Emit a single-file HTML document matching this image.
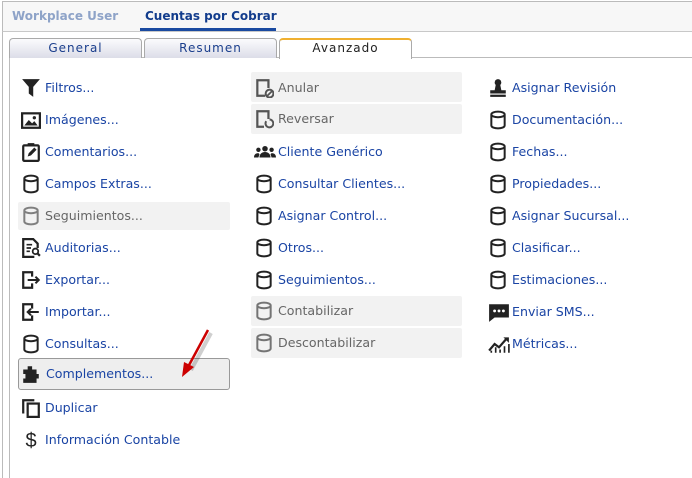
<!DOCTYPE html>
<html><head><meta charset="utf-8"><style>
*{margin:0;padding:0;box-sizing:border-box}
body{width:692px;height:478px;background:#fff;font-family:"DejaVu Sans","Liberation Sans",sans-serif;position:relative;overflow:hidden}
.a{position:absolute}
.top{left:2px;top:1px;width:690px;height:31px;background:#f7f7f7;border-top:1px solid #bbb;border-bottom:1px solid #c8c8c8;border-left:1px solid #bbb}
.t1{left:12px;top:9px;font-size:12px;font-weight:bold;color:#8ea3c8}
.t2{left:145px;top:9px;font-size:12px;font-weight:bold;color:#123c8c}
.ul{left:140px;top:28px;width:136px;height:3px;background:#1a4aa0}
.lb{left:2px;top:32px;width:1px;height:446px;background:#bbb}
.lb2{left:9px;top:57px;width:1px;height:421px;background:#bbb}
.tabline{left:9px;top:57px;width:683px;height:1px;background:#bbb}
.tab{top:38px;height:20px;border:1px solid #aaa;border-bottom:none;border-radius:4px 4px 0 0;background:linear-gradient(#fbfbfd,#dcdde8);font-size:12px;color:#1a3e8c;text-align:center;line-height:18px;letter-spacing:1px}
.tab.on{background:#fff;border-top:2px solid #f0b030;height:21px;color:#222;line-height:17px}
.it{position:absolute;height:28px;width:212px;font-size:12.6px;color:#1a44a4;line-height:28px;padding-left:27px;white-space:nowrap}
.it svg{position:absolute;left:3px;top:4px}
.dis{background:#f2f2f2;color:#666;border-radius:2px}
.sel{background:#eee;border:1px solid #999;border-radius:3px;height:32px;line-height:30px}
</style></head><body>
<div class="a top"></div>
<div class="a t1">Workplace User</div>
<div class="a t2">Cuentas por Cobrar</div>
<div class="a ul"></div>
<div class="a lb"></div>
<div class="a lb2"></div>
<div class="a tabline"></div>
<div class="a tab" style="left:9px;width:133px">General</div>
<div class="a tab" style="left:144px;width:133px">Resumen</div>
<div class="a tab on" style="left:279px;width:133px">Avanzado</div>

<svg width="0" height="0" style="position:absolute"><defs>
<symbol id="cy" viewBox="0 0 18 18"><path d="M3 4v10c0 1.5 2.7 2.5 6 2.5s6-1 6-2.5V4M3 4c0-1.5 2.7-2.5 6-2.5s6 1 6 2.5-2.7 2.5-6 2.5S3 5.5 3 4z" fill="none" stroke="#222" stroke-width="1.8"/></symbol>
</defs></svg>

<!-- column 1 -->
<div class="it" style="left:18px;top:74px"><svg width="20" height="20" viewBox="0 0 18 18"><path d="M1 1h16l-6 7v9l-4-3V8z" fill="#222"/></svg>Filtros...</div>
<div class="it" style="left:18px;top:106px"><svg width="20" height="20" viewBox="0 0 18 18"><rect x="1" y="3" width="16" height="13" fill="none" stroke="#222" stroke-width="2"/><path d="M3 14l4-5 3 3 2-2 3 4z" fill="#222"/><circle cx="12" cy="7" r="1.5" fill="#222"/></svg>Imágenes...</div>
<div class="it" style="left:18px;top:138px"><svg width="20" height="20" viewBox="0 0 18 18"><rect x="2" y="3" width="14" height="14" rx="1" fill="none" stroke="#222" stroke-width="2"/><rect x="6" y="1" width="6" height="3" fill="#222"/><path d="M6 13l1-3 5-5 2 2-5 5z" fill="#222"/></svg>Comentarios...</div>
<div class="it" style="left:18px;top:170px"><svg width="20" height="20"><use href="#cy"/></svg>Campos Extras...</div>
<div class="it dis" style="left:18px;top:202px"><svg width="20" height="20" opacity=".55"><use href="#cy"/></svg>Seguimientos...</div>
<div class="it" style="left:18px;top:234px"><svg width="20" height="20" viewBox="0 0 18 18"><path d="M12 17H2V1h9l4 4v4" fill="none" stroke="#222" stroke-width="2"/><path d="M5 6h5M5 9h4M5 12h3" stroke="#222" stroke-width="1.5"/><circle cx="13" cy="12" r="2.5" fill="none" stroke="#222" stroke-width="1.6"/><path d="M15 14l2 2" stroke="#222" stroke-width="2"/></svg>Auditorias...</div>
<div class="it" style="left:18px;top:266px"><svg width="20" height="20" viewBox="0 0 18 18"><path d="M10 6V2H2v14h8v-4" fill="none" stroke="#222" stroke-width="2"/><path d="M6 9h10M13 6l3 3-3 3" fill="none" stroke="#222" stroke-width="1.8"/></svg>Exportar...</div>
<div class="it" style="left:18px;top:298px"><svg width="20" height="20" viewBox="0 0 18 18"><path d="M10 6V2H2v14h8v-4" fill="none" stroke="#222" stroke-width="2"/><path d="M6 9h10M9 6L6 9l3 3" fill="none" stroke="#222" stroke-width="1.8"/></svg>Importar...</div>
<div class="it" style="left:18px;top:330px"><svg width="20" height="20"><use href="#cy"/></svg>Consultas...</div>
<div class="it sel" style="left:18px;top:358px"><svg width="20" height="20" viewBox="0 0 18 18" style="top:5px;left:2px"><path d="M2 5h4V2h4v3h4v4h2v4h-2v4H2v-4h2V9H2z" fill="#222"/></svg>Complementos...</div>
<div class="it" style="left:18px;top:394px"><svg width="20" height="20" viewBox="0 0 18 18"><path d="M2 14V2h10" fill="none" stroke="#222" stroke-width="2"/><rect x="6" y="5" width="10" height="12" fill="none" stroke="#222" stroke-width="2"/></svg>Duplicar</div>
<div class="it" style="left:18px;top:426px"><svg width="20" height="20"><text x="10" y="17" font-size="20" text-anchor="middle" fill="#222" font-family="Liberation Sans">$</text></svg>Información Contable</div>

<!-- column 2 -->
<div class="it dis" style="left:251px;top:72px;width:211px;height:30px;line-height:32px"><svg width="20" height="20" viewBox="0 0 18 18" style="top:6px"><path d="M10 16H3V2h10v7" fill="none" stroke="#555" stroke-width="2"/><circle cx="14" cy="14" r="3.5" fill="none" stroke="#555" stroke-width="1.8"/><path d="M12 16l4-4" stroke="#555" stroke-width="1.6"/></svg>Anular</div>
<div class="it dis" style="left:251px;top:104px;width:211px;height:30px;line-height:30px"><svg width="20" height="20" viewBox="0 0 18 18" style="top:5px"><path d="M9 16H3V2h10v7" fill="none" stroke="#555" stroke-width="2"/><path d="M11 11a3.5 3.5 0 1 0 3-1.5" fill="none" stroke="#555" stroke-width="1.8"/></svg>Reversar</div>
<div class="it" style="left:251px;top:138px"><svg width="22" height="20" viewBox="0 0 20 18"><circle cx="10" cy="6" r="2.5" fill="#222"/><circle cx="4" cy="7" r="2" fill="#222"/><circle cx="16" cy="7" r="2" fill="#222"/><path d="M5 14c0-3 2-5 5-5s5 2 5 5zM0 14c0-2 1-4 4-4l1 1-1 3zM20 14c0-2-1-4-4-4l-1 1 1 3z" fill="#222"/></svg>Cliente Genérico</div>
<div class="it" style="left:251px;top:170px"><svg width="20" height="20"><use href="#cy"/></svg>Consultar Clientes...</div>
<div class="it" style="left:251px;top:202px"><svg width="20" height="20"><use href="#cy"/></svg>Asignar Control...</div>
<div class="it" style="left:251px;top:234px"><svg width="20" height="20"><use href="#cy"/></svg>Otros...</div>
<div class="it" style="left:251px;top:266px"><svg width="20" height="20"><use href="#cy"/></svg>Seguimientos...</div>
<div class="it dis" style="left:251px;top:296px;width:211px;height:30px;line-height:30px"><svg width="20" height="20" opacity=".6" style="top:5px"><use href="#cy"/></svg>Contabilizar</div>
<div class="it dis" style="left:251px;top:328px;width:211px;height:30px;line-height:30px"><svg width="20" height="20" opacity=".6" style="top:5px"><use href="#cy"/></svg>Descontabilizar</div>

<!-- column 3 -->
<div class="it" style="left:485px;top:74px"><svg width="20" height="20" viewBox="0 0 18 18"><circle cx="9" cy="4" r="3" fill="#222"/><path d="M7 6h4l1 5h4v3H2v-3h4z" fill="#222"/><rect x="2" y="15" width="14" height="2" fill="#222"/></svg>Asignar Revisión</div>
<div class="it" style="left:485px;top:106px"><svg width="20" height="20"><use href="#cy"/></svg>Documentación...</div>
<div class="it" style="left:485px;top:138px"><svg width="20" height="20"><use href="#cy"/></svg>Fechas...</div>
<div class="it" style="left:485px;top:170px"><svg width="20" height="20"><use href="#cy"/></svg>Propiedades...</div>
<div class="it" style="left:485px;top:202px"><svg width="20" height="20"><use href="#cy"/></svg>Asignar Sucursal...</div>
<div class="it" style="left:485px;top:234px"><svg width="20" height="20"><use href="#cy"/></svg>Clasificar...</div>
<div class="it" style="left:485px;top:266px"><svg width="20" height="20"><use href="#cy"/></svg>Estimaciones...</div>
<div class="it" style="left:485px;top:298px"><svg width="22" height="20" viewBox="0 0 20 18"><path d="M1 2h18v12H6l-5 4z" fill="#222"/><circle cx="6" cy="8" r="1.3" fill="#fff"/><circle cx="10" cy="8" r="1.3" fill="#fff"/><circle cx="14" cy="8" r="1.3" fill="#fff"/></svg>Enviar SMS...</div>
<div class="it" style="left:485px;top:330px"><svg width="22" height="20" viewBox="0 0 20 18"><path d="M1 15l5-6 4 3 7-8" fill="none" stroke="#222" stroke-width="2"/><path d="M14 3h5v5z" fill="#222"/><path d="M3 17v-2M7 17v-5M11 17v-3M15 17v-6M19 17v-8" stroke="#222" stroke-width="1.5"/></svg>Métricas...</div>

<!-- red arrow -->
<svg class="a" style="left:170px;top:325px" width="50" height="60"><path d="M38 5L18 42" stroke="#00000030" stroke-width="4" transform="translate(3,3)"/><path d="M38 5L18 42" stroke="#c00" stroke-width="2.5"/><path d="M12 52l2-15 10 5z" fill="#c00"/></svg>
</body></html>
